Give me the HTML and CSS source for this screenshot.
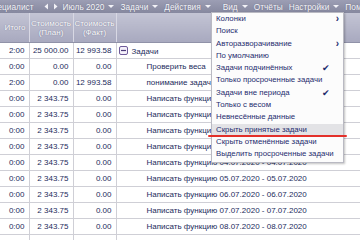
FILE: index.html
```html
<!DOCTYPE html>
<html>
<head>
<meta charset="utf-8">
<link rel="stylesheet" href="styles.css">
</head>
<body>
<div class="app">
  <div class="toolbar">
    <span class="tb-user">Специалист</span>
    <span class="tb-nav">
      <svg width="5" height="7" viewBox="0 0 5 7"><path d="M4 0.5 L0.5 3.5 L4 6.5 Z" fill="#f2f2f7"/></svg>
      <svg width="5" height="7" viewBox="0 0 5 7"><path d="M1 0.5 L4.5 3.5 L1 6.5 Z" fill="#f2f2f7"/></svg>
    </span>
    <span class="tb-item month">Июль 2020<i class="caret"></i></span>
    <span class="tb-item">Задачи<i class="caret"></i></span>
    <span class="tb-item">Действия<i class="caret"></i></span>
    <span class="tb-item view">Вид<i class="caret"></i></span>
    <span class="tb-item">Отчёты</span>
    <span class="tb-item">Настройки<i class="caret"></i></span>
    <span class="tb-item">Помощь</span>
  </div>
  <table class="grid">
    <colgroup><col class="c1"><col class="c2"><col class="c3"><col class="c4"></colgroup>
    <thead>
      <tr><th>Итого</th><th>Стоимость<br>(План)</th><th>Стоимость<br>(Факт)</th><th></th></tr>
    </thead>
    <tbody>
      <tr><td>2:00</td><td>25 000.00</td><td>12 993.58</td><td class="group"><svg class="toggle" width="9" height="9" viewBox="0 0 9 9"><rect x="0.5" y="0.5" width="8" height="8" rx="1.5" fill="#f4f0fa" stroke="#6e5a9a"/><path d="M2 4.5 H7" stroke="#4a3a78" stroke-width="1.2"/></svg>Задачи</td></tr>
      <tr><td>0:00</td><td>0.00</td><td>0.00</td><td class="task">Проверить веса</td></tr>
      <tr><td>2:00</td><td>0.00</td><td>12 993.58</td><td class="task">понимание задач</td></tr>
      <tr><td>0:00</td><td>2 343.75</td><td>0.00</td><td class="task">Написать функцию 30.06.2020 - 30.06.2020</td></tr>
      <tr><td>0:00</td><td>2 343.75</td><td>0.00</td><td class="task">Написать функцию 01.07.2020 - 01.07.2020</td></tr>
      <tr><td>0:00</td><td>2 343.75</td><td>0.00</td><td class="task">Написать функцию 02.07.2020 - 02.07.2020</td></tr>
      <tr><td>0:00</td><td>2 343.75</td><td>0.00</td><td class="task">Написать функцию 03.07.2020 - 03.07.2020</td></tr>
      <tr><td>0:00</td><td>2 343.75</td><td>0.00</td><td class="task">Написать функцию 04.07.2020 - 04.07.2020</td></tr>
      <tr><td>0:00</td><td>2 343.75</td><td>0.00</td><td class="task">Написать функцию 05.07.2020 - 05.07.2020</td></tr>
      <tr><td>0:00</td><td>2 343.75</td><td>0.00</td><td class="task">Написать функцию 06.07.2020 - 06.07.2020</td></tr>
      <tr><td>0:00</td><td>2 343.75</td><td>0.00</td><td class="task">Написать функцию 07.07.2020 - 07.07.2020</td></tr>
      <tr><td>0:00</td><td>2 343.75</td><td>0.00</td><td class="task">Написать функцию 08.07.2020 - 08.07.2020</td></tr>
      <tr><td>0:00</td><td>2 343.75</td><td>0.00</td><td class="task">Написать функцию 09.07.2020 - 09.07.2020</td></tr>
    </tbody>
  </table>
  <div class="menu">
    <div class="mi">Колонки<span class="sub">›</span></div>
    <div class="mi">Поиск</div>
    <div class="mi">Авторазворачивание<span class="sub">›</span></div>
    <div class="mi">По умолчанию</div>
    <div class="mi">Задачи подчинённых<span class="chk">✔</span></div>
    <div class="mi">Только просроченные задачи</div>
    <div class="mi">Задачи вне периода<span class="chk">✔</span></div>
    <div class="mi">Только с весом</div>
    <div class="mi">Невнесённые данные</div>
    <div class="mi hover">Скрыть принятые задачи</div>
    <div class="mi">Скрыть отменённые задачи</div>
    <div class="mi">Выделить просроченные задачи</div>
  </div>
  <div class="redline"></div>
</div>
</body>
</html>
```
FILE: styles.css
```css
html, body {
  margin: 0;
  padding: 0;
  background: #ffffff;
  overflow: hidden;
}
.app {
  position: relative;
  width: 360px;
  height: 240px;
  overflow: hidden;
  font-family: "Liberation Sans", Arial, sans-serif;
}
.toolbar {
  height: 13px;
  display: flex;
  align-items: center;
  white-space: nowrap;
  background: linear-gradient(#9c9eb4, #86889f);
  color: #f6f6fa;
  font-size: 8.3px;
  text-shadow: 0 0 1px rgba(60, 60, 90, 0.5);
}
.tb-user {
  margin-left: -13px;
}
.tb-nav {
  display: flex;
  gap: 4px;
  margin-left: 10px;
}
.tb-item {
  display: flex;
  align-items: center;
  gap: 4px;
  margin-left: 6px;
}
.tb-item.view {
  margin-left: 12px;
}
.month {
  margin-left: 5px;
}
.caret {
  display: inline-block;
  width: 0;
  height: 0;
  border-left: 3px solid transparent;
  border-right: 3px solid transparent;
  border-top: 3px solid #f2f2f7;
}
.grid {
  border-collapse: collapse;
  table-layout: fixed;
  width: 380px;
  font-size: 8px;
  color: #232b5c;
}
.c1 { width: 29px; }
.c2 { width: 44px; }
.c3 { width: 43px; }
.c4 { width: 264px; }
.grid th {
  height: 29px;
  padding: 0;
  font-weight: normal;
  color: #ffffff;
  text-shadow: 0 0 1px rgba(70, 70, 105, 0.75);
  line-height: 9px;
  background: linear-gradient(#c3c4d4, #a8a9bf);
  border-left: 1px solid #d8d8e4;
  border-bottom: 1px solid #9092a8;
  text-align: center;
}
.grid th:first-child {
  border-left: none;
  text-align: right;
  padding-right: 3px;
}
.grid td {
  height: 15px;
  padding: 0 4px 0 0;
  border-left: 1px solid #cfcfd6;
  border-bottom: 1px solid #cfcfd6;
  text-align: right;
  white-space: nowrap;
  overflow: hidden;
}
.grid td:first-child {
  border-left: none;
}
.grid td.group {
  text-align: left;
  padding-left: 2px;
}
.grid td.task {
  text-align: left;
  padding-left: 30px;
}
.toggle {
  vertical-align: -1px;
  margin-right: 4px;
}
.menu {
  position: absolute;
  left: 211px;
  top: 12px;
  width: 131px;
  padding: 0 0 1px;
  background: #fcfcfc;
  border: 1px solid #b9b9c2;
  box-shadow: 1px 1px 2px rgba(0, 0, 0, 0.25);
  font-size: 7.8px;
  color: #1f2c6e;
}
.mi {
  position: relative;
  height: 12.3px;
  line-height: 12.3px;
  padding-left: 4px;
  white-space: nowrap;
}
.mi.hover {
  background: #e3e3e6;
}
.sub {
  position: absolute;
  right: 4px;
  top: 0;
  font-weight: bold;
  font-size: 10px;
}
.chk {
  position: absolute;
  right: 13px;
  top: 0;
  font-size: 9px;
}
.redline {
  position: absolute;
  left: 208px;
  top: 135px;
  width: 139px;
  height: 2px;
  background: #e3302a;
  border-radius: 1px;
}
```
